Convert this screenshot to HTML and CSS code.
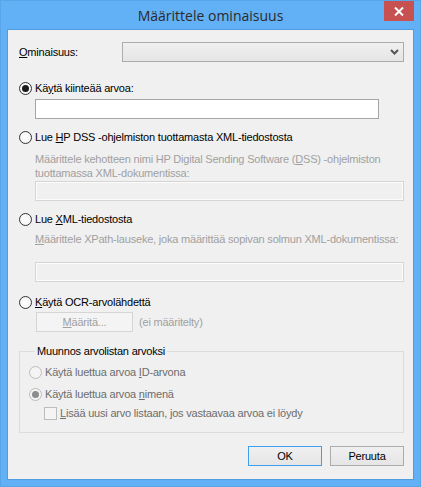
FILE: index.html
```html
<!DOCTYPE html>
<html lang="fi">
<head>
  <meta charset="UTF-8">
  <title>Määrittele ominaisuus</title>
  <link rel="stylesheet" href="styles.css">
</head>
<body>

<div class="window">
  <div class="titlebar">
    <span></span>
    <span class="title">Määrittele ominaisuus</span>
    <button class="close" aria-label="Sulje">
      <svg width="10" height="9" viewBox="0 0 10 9"><path d="M1 0.5 L9 8.5 M9 0.5 L1 8.5" stroke="#fff" stroke-width="2"/></svg>
    </button>
  </div>

  <div class="client">
    <div class="row-prop">
      <label class="prop-label"><u>O</u>minaisuus:</label>
      <div class="combo">
        <svg width="9" height="6" viewBox="0 0 9 6"><path d="M1 1 L4.5 4.5 L8 1" stroke="#555" stroke-width="2" fill="none"/></svg>
      </div>
    </div>

    <div class="radio-row first">
      <span class="radio checked"></span>
      <span>Kä<u>y</u>tä kiinteää arvoa:</span>
    </div>
    <div class="textbox fixed"></div>

    <div class="radio-row">
      <span class="radio"></span>
      <span>Lue <u>H</u>P DSS -ohjelmiston tuottamasta XML-tiedostosta</span>
    </div>
    <div class="hint two">Määrittele kehotteen nimi HP Digital Sending Software (<u>D</u>SS) -ohjelmiston<br>tuottamassa XML-dokumentissa:</div>
    <div class="textbox off"></div>

    <div class="radio-row">
      <span class="radio"></span>
      <span>Lue <u>X</u>ML-tiedostosta</span>
    </div>
    <div class="hint one"><u>M</u>äärittele XPath-lauseke, joka määrittää sopivan solmun XML-dokumentissa:</div>
    <div class="textbox off xpath"></div>

    <div class="radio-row ocr">
      <span class="radio"></span>
      <span><u>K</u>äytä OCR-arvolähdettä</span>
    </div>
    <div class="ocr-row">
      <button class="btn disabled" disabled><u>M</u>ääritä...</button>
      <span class="muted">(ei määritelty)</span>
    </div>

    <fieldset class="group">
      <legend>Muunnos arvolistan arvoksi</legend>
      <div class="radio-row dim">
        <span class="radio off"></span>
        <span>Käytä luettua arvoa <u>I</u>D-arvona</span>
      </div>
      <div class="radio-row dim second">
        <span class="radio off checked"></span>
        <span>Käytä luettua arvoa <u>n</u>imenä</span>
      </div>
      <div class="radio-row dim check">
        <span class="checkbox off"></span>
        <span><u>L</u>isää uusi arvo listaan, jos vastaavaa arvoa ei löydy</span>
      </div>
    </fieldset>

    <div class="actions">
      <button class="btn default">OK</button>
      <button class="btn">Peruuta</button>
    </div>
  </div>
</div>

</body>
</html>
```

FILE: styles.css
```css
body {
  margin: 0;
  padding: 0;
  font-family: "Liberation Sans", Arial, sans-serif;
  font-size: 11px;
  letter-spacing: -0.2px;
  color: #000;
}

.window {
  width: 421px;
  height: 487px;
  box-sizing: border-box;
  background-color: #62b0f6;
  border: 1px solid #5aa5e8;
  display: flex;
  flex-direction: column;
}

.titlebar {
  height: 28px;
  display: grid;
  grid-template-columns: 1fr auto 1fr;
  align-items: start;
}

.titlebar .title {
  font-family: "Open Sans", sans-serif;
  font-size: 14px;
  letter-spacing: 0;
  line-height: 30px;
  color: #2b2b2b;
}

.titlebar .close {
  justify-self: end;
  width: 30px;
  height: 20px;
  margin-right: 6px;
  border: 0;
  padding: 0;
  background-color: #c75050;
  display: flex;
  align-items: center;
  justify-content: center;
}

.client {
  flex: 1;
  margin: 0 6px 6px;
  border: 1px solid #4f9ddf;
  background-color: #f0f0f0;
  padding: 12px 9px 0 11px;
}

u {
  text-decoration: underline;
  text-underline-offset: 1px;
}

.row-prop {
  display: flex;
  align-items: center;
  height: 20px;
}

.prop-label {
  width: 103px;
}

.combo {
  flex: 1;
  height: 20px;
  box-sizing: border-box;
  border: 1px solid #acacac;
  background: linear-gradient(#f0f0f0, #e5e5e5);
  display: flex;
  align-items: center;
  justify-content: flex-end;
  padding-right: 4px;
}

.radio-row {
  display: flex;
  align-items: center;
  gap: 3px;
  height: 16px;
  margin-top: 10px;
}

.radio-row.first {
  margin-top: 18px;
}

.radio {
  width: 13px;
  height: 13px;
  box-sizing: border-box;
  border-radius: 50%;
  border: 1px solid #333;
  background: radial-gradient(#fff, #f0f0f0);
  flex: none;
  position: relative;
}

.radio.checked::after {
  content: "";
  position: absolute;
  left: 2px;
  top: 2px;
  width: 7px;
  height: 7px;
  border-radius: 50%;
  background-color: #1a1a1a;
}

.radio.off {
  border-color: #bcbcbc;
  background: #f4f4f4;
}

.radio.off.checked::after {
  background-color: #8c8c8c;
}

.checkbox {
  width: 13px;
  height: 13px;
  box-sizing: border-box;
  border: 1px solid #bcbcbc;
  background-color: #f4f4f4;
  flex: none;
}

.textbox {
  height: 20px;
  box-sizing: border-box;
  margin-left: 16px;
}

.textbox.fixed {
  width: 344px;
  margin-top: 3px;
  border: 1px solid #a5a5a5;
  background-color: #fff;
}

.textbox.off {
  border: 1px solid #d5d5d5;
  box-shadow: inset 0 0 0 1px #fcfcfc;
  background-color: #f0f0f0;
  margin-top: 1px;
}

.textbox.xpath {
  margin-top: 16px;
}

.hint {
  margin-left: 16px;
  color: #a0a0a0;
  line-height: 14px;
}

.hint.two {
  margin-top: 7px;
}

.hint.one {
  margin-top: 5px;
}

.radio-row.ocr {
  margin-top: 12px;
}

.ocr-row {
  display: flex;
  align-items: center;
  gap: 6px;
  margin-top: 2px;
  margin-left: 17px;
}

.muted {
  color: #a0a0a0;
}

.btn {
  height: 20px;
  width: 74px;
  box-sizing: border-box;
  border: 1px solid #acacac;
  background: linear-gradient(#f0f0f0, #e5e5e5);
  font-family: inherit;
  font-size: 11px;
  letter-spacing: -0.2px;
  color: #000;
  padding: 0;
}

.btn.disabled {
  width: 97px;
  border-color: #d5d5d5;
  background: #f4f4f4;
  color: #a0a0a0;
}

.btn.default {
  border-color: #3c9ff0;
}

.group {
  margin: 11px 0 0;
  padding: 5px 0 11px 9px;
  border: 1px solid #dcdcdc;
}

.group legend {
  padding: 0 2px;
  margin-left: 6px;
  line-height: 16px;
}

.group .radio-row {
  margin-top: 0;
}

.radio-row.dim {
  color: #6d6d6d;
}

.radio-row.second {
  margin-top: 6px;
}

.radio-row.check {
  margin-top: 3px;
  margin-left: 15px;
}

.actions {
  display: flex;
  justify-content: flex-end;
  gap: 8px;
  margin-top: 13px;
}
```
